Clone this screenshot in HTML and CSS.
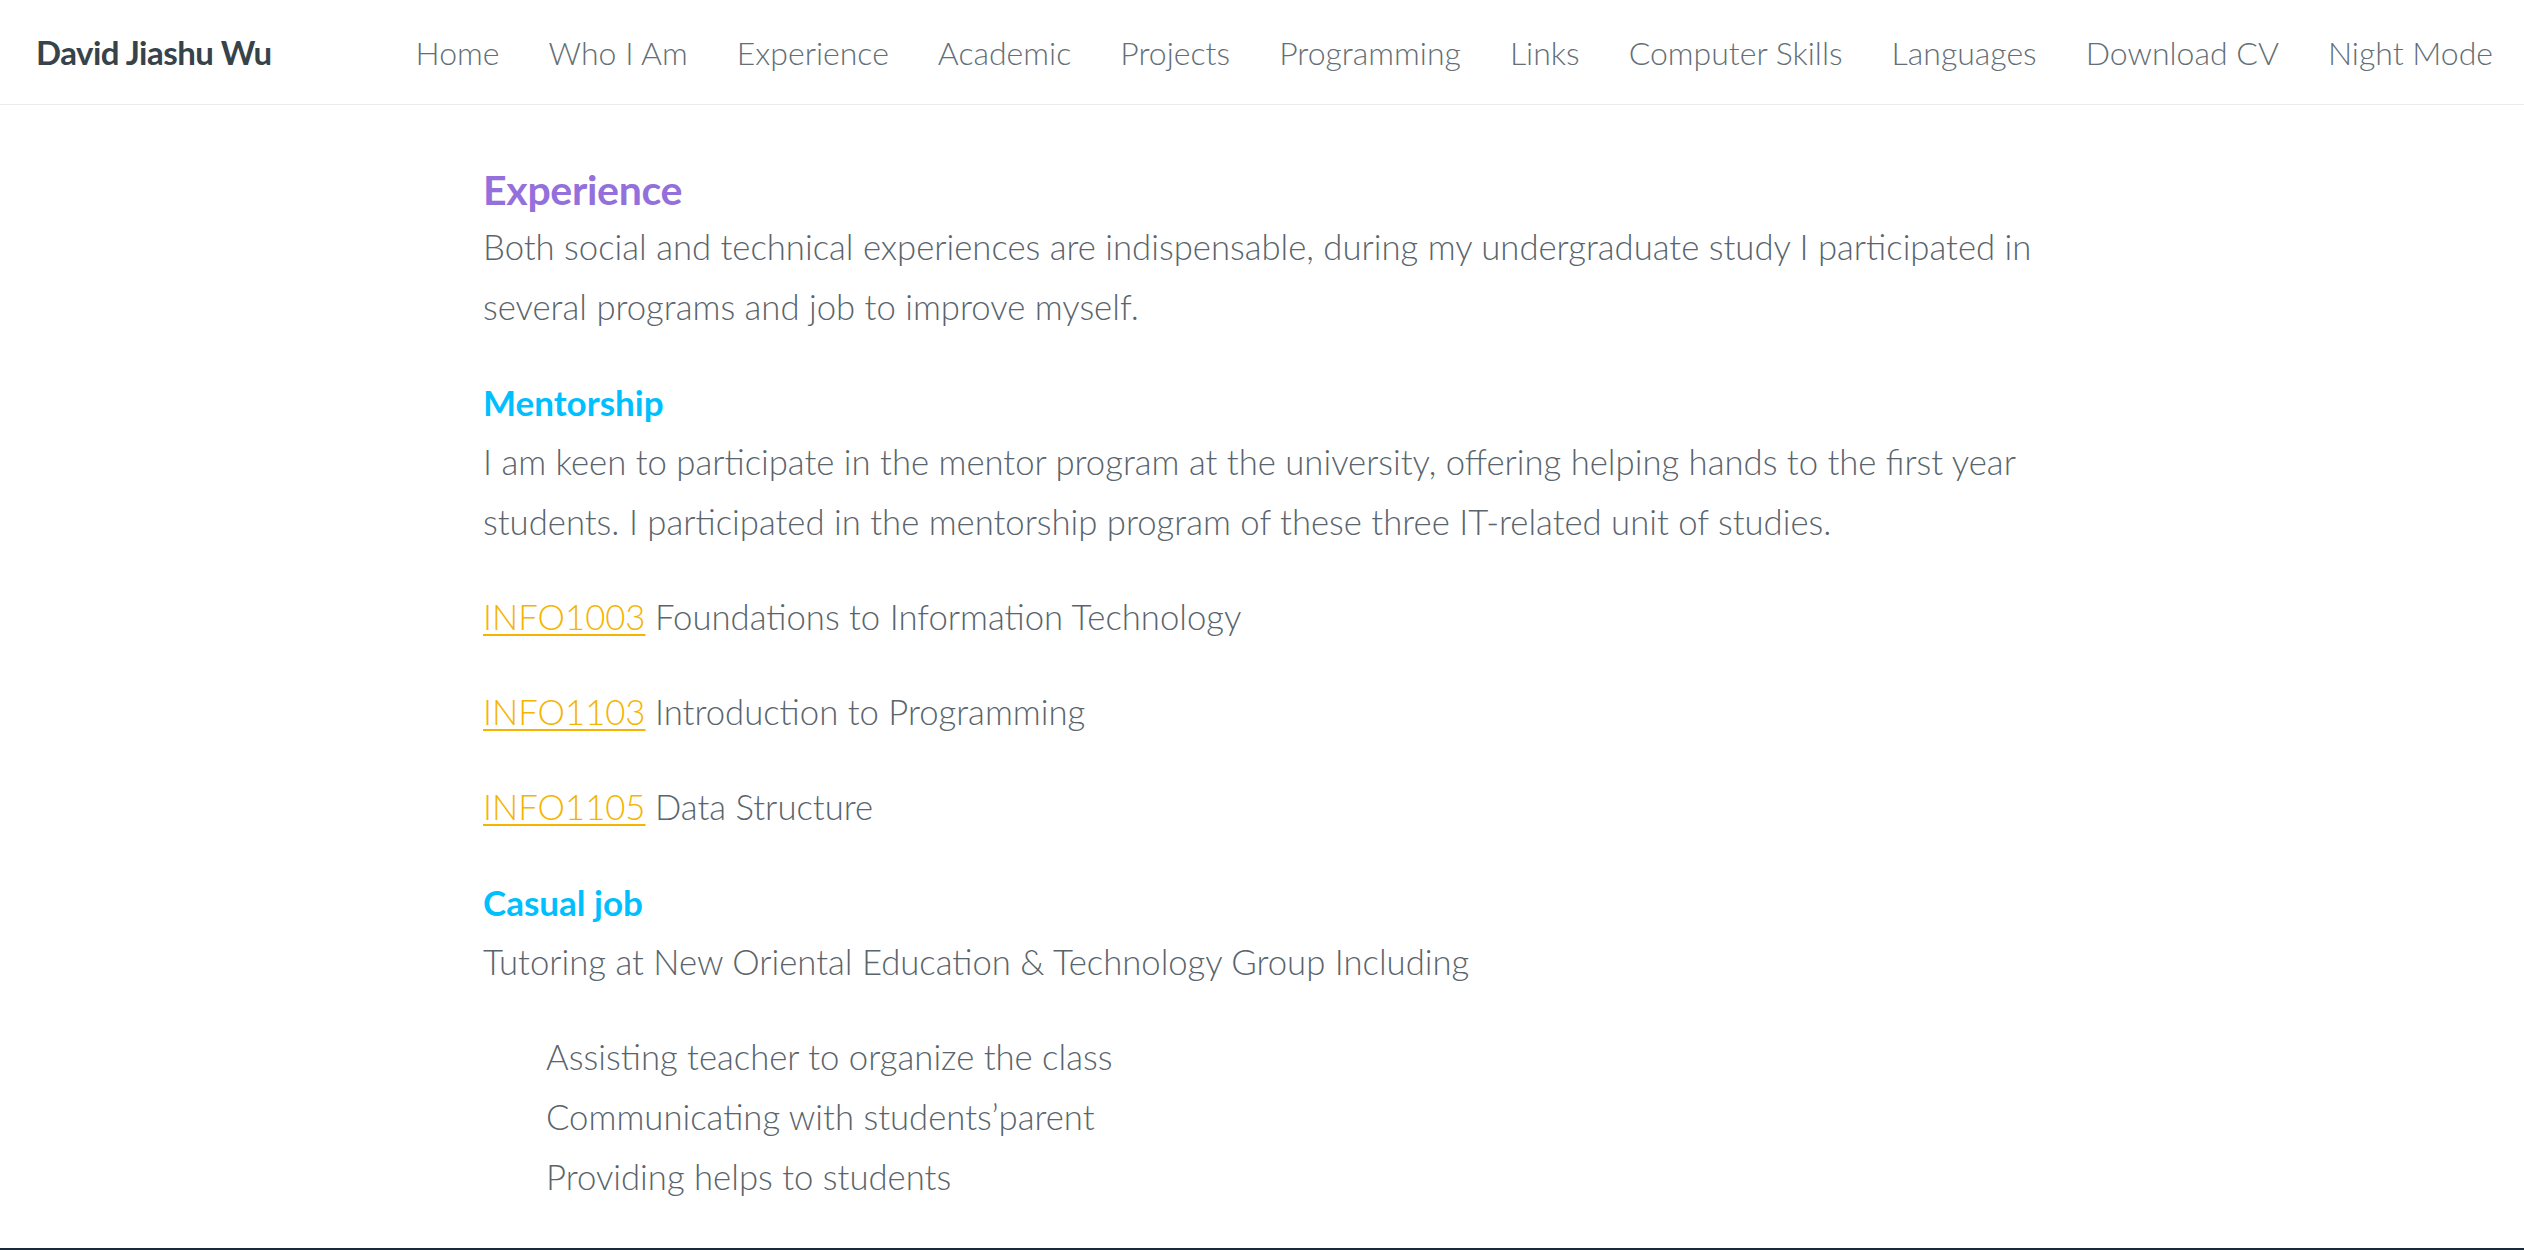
FILE: index.html
```html
<!DOCTYPE html>
<html lang="en">
<head>
<meta charset="utf-8">
<title>David Jiashu Wu</title>
<link rel="stylesheet" href="styles.css">
</head>
<body>
<header class="navbar">
  <a class="brand" href="#">David Jiashu Wu</a>
  <nav class="menu">
    <a href="#">Home</a>
    <a href="#">Who I Am</a>
    <a href="#">Experience</a>
    <a href="#">Academic</a>
    <a href="#">Projects</a>
    <a href="#">Programming</a>
    <a href="#">Links</a>
    <a href="#">Computer Skills</a>
    <a href="#">Languages</a>
    <a href="#">Download CV</a>
    <a href="#">Night Mode</a>
  </nav>
</header>
<main class="container">
  <section class="section">
    <h2 class="section-title">Experience</h2>
    <p>Both social and technical experiences are indispensable, during my undergraduate study I participated in several programs and job to improve myself.</p>
    <h3 class="sub-title">Mentorship</h3>
    <p>I am keen to participate in the mentor program at the university, offering helping hands to the first year students. I participated in the mentorship program of these three IT-related unit of studies.</p>
    <p><a class="unit" href="#">INFO1003</a> Foundations to Information Technology</p>
    <p><a class="unit" href="#">INFO1103</a> Introduction to Programming</p>
    <p><a class="unit" href="#">INFO1105</a> Data Structure</p>
    <h3 class="sub-title">Casual job</h3>
    <p>Tutoring at New Oriental Education &amp; Technology Group Including</p>
    <ul class="duties">
      <li>Assisting teacher to organize the class</li>
      <li>Communicating with students’parent</li>
      <li>Providing helps to students</li>
    </ul>
  </section>
</main>
<footer class="footer"></footer>
</body>
</html>
```

FILE: styles.css
```css
html, body {
  margin: 0;
  padding: 0;
  background: #ffffff;
}

body {
  font-family: "Lato", "Open Sans", "Liberation Sans", sans-serif;
  font-weight: 300;
  color: #59646c;
}

a {
  text-decoration: none;
  color: inherit;
}

.navbar {
  height: 104px;
  display: flex;
  align-items: center;
  justify-content: space-between;
  padding: 0 31px 0 36px;
  border-bottom: 1px solid #ececec;
}

.brand {
  font-weight: 700;
  font-size: 33px;
  color: #37434b;
  letter-spacing: -0.5px;
}

.menu {
  display: flex;
  gap: 49px;
  font-size: 32px;
  color: #646e76;
}

.container {
  width: 1558px;
  margin: 0 auto;
  padding-top: 57px;
}

.section-title {
  margin: 0;
  font-size: 41px;
  line-height: 55px;
  font-weight: 700;
  color: #9370db;
  letter-spacing: -0.3px;
}

.sub-title {
  margin: 0;
  font-size: 35px;
  line-height: 60px;
  font-weight: 700;
  color: #00bfff;
}

.section p {
  margin: 0 0 35px;
  font-size: 34.7px;
  line-height: 60px;
}

.unit {
  color: #f5b400;
  text-decoration: underline;
  text-underline-offset: 4px;
  text-decoration-thickness: 2px;
}

.duties {
  list-style: none;
  margin: 0 0 41px;
  padding: 0 0 0 63px;
  font-size: 34.7px;
  line-height: 60px;
}

.footer {
  height: 40px;
  background: #1b2a3a;
}
```
